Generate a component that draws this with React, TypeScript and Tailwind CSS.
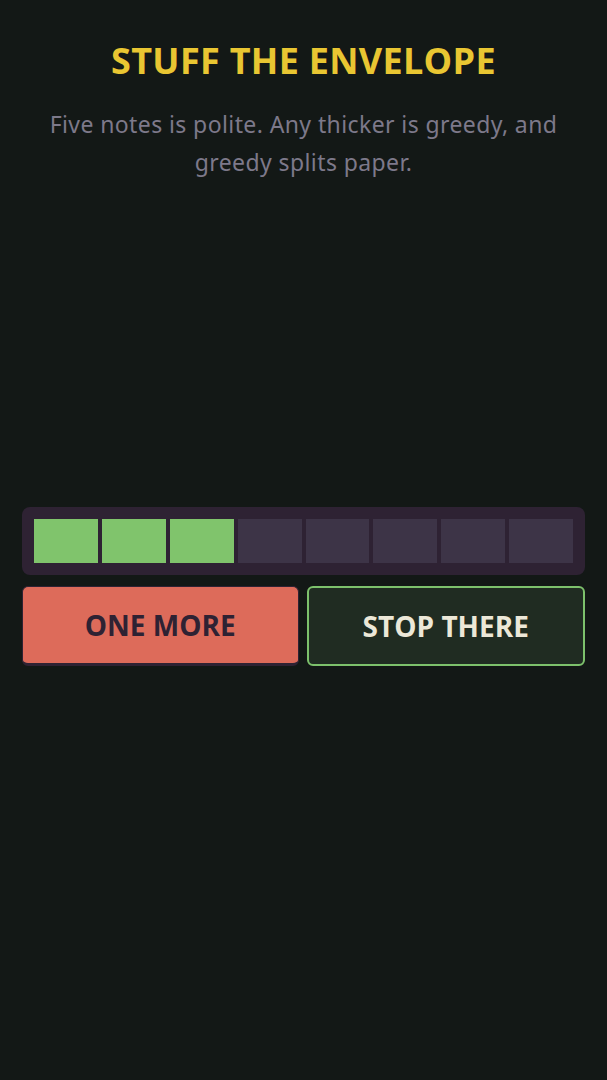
export default function App() {
  const filled = 3;
  const cells = Array.from({ length: 8 }, (_, i) => i < filled);
  return (
    <div className="min-h-[1080px] w-full bg-[#131816] px-[22px] pt-[40px]" style={{ fontFamily: '"Open Sans", "Noto Sans", sans-serif' }}>
      <h1 className="text-center text-[36px] leading-[42px] font-bold tracking-[0.3px] text-[#e9c632]">STUFF THE ENVELOPE</h1>
      <p className="mx-auto mt-[23px] w-[540px] text-center text-[23px] leading-[38px] tracking-[0.4px] text-[#7d798a]" style={{ fontFamily: '"Noto Sans", sans-serif' }}>
        Five notes is polite. Any thicker is greedy, and greedy splits paper.
      </p>
      <div className="mt-[326px] flex gap-[4px] rounded-[8px] bg-[#2e2233] p-[12px]">
        {cells.map((f, i) => (
          <div key={i} className={f ? "h-[44px] flex-1 bg-[#80c46c]" : "h-[44px] flex-1 bg-[#3d3447]"} />
        ))}
      </div>
      <div className="mt-[11px] flex gap-[8px]">
        <button className="flex h-[80px] flex-1 items-center justify-center rounded-[6px] border-[1px] border-b-[3px] border-[#2e2233] bg-[#dd6b5a] text-[28px] font-bold text-[#2e2233]">
          ONE MORE
        </button>
        <button className="flex h-[80px] flex-1 items-center justify-center rounded-[6px] border-[2px] border-[#7dc16c] bg-[#202c22] text-[28px] font-bold text-[#ece8d8]">
          STOP THERE
        </button>
      </div>
    </div>
  );
}
